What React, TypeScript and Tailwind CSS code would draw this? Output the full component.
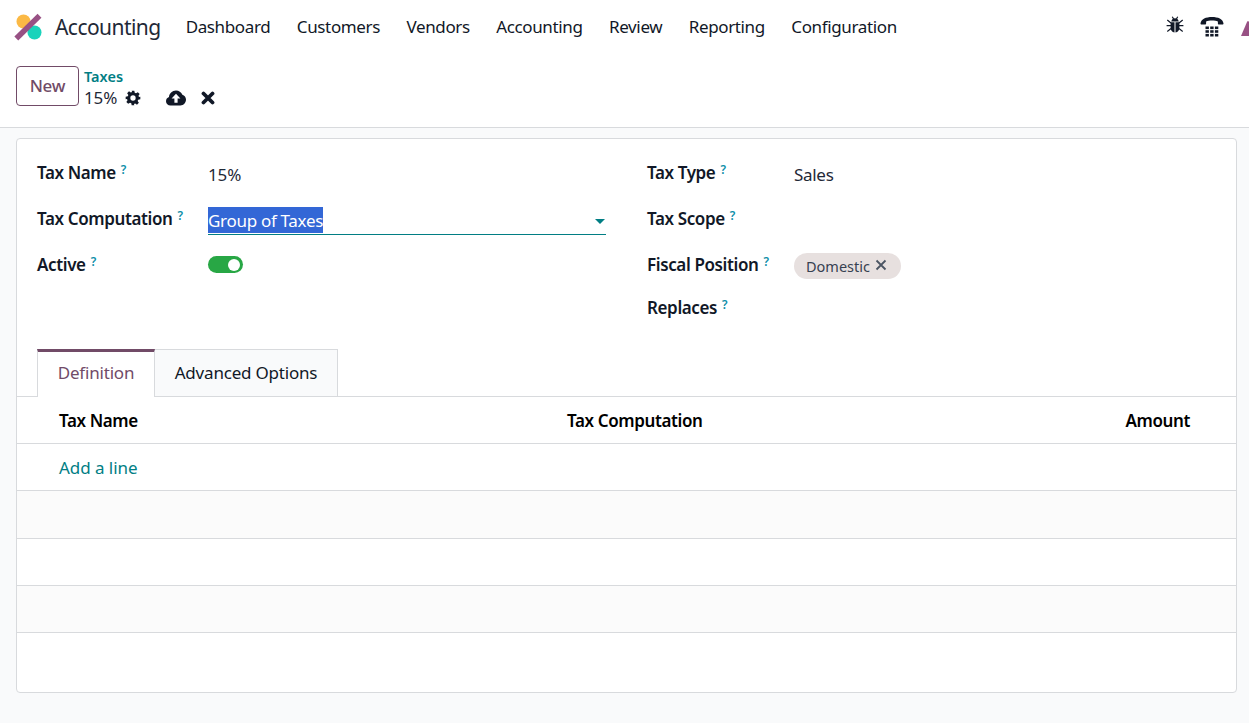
import React from "react";

function Help() {
  return <sup className="text-[#0d8ea8] text-[12px] font-semibold leading-none ml-[5px] relative -top-[5px] tracking-normal">?</sup>;
}

function Label({ children }: { children: React.ReactNode }) {
  return (
    <div className="font-semibold text-[#111827] text-[17px] leading-[23px] whitespace-nowrap tracking-[-0.38px]">
      {children}
      <Help />
    </div>
  );
}

function Logo() {
  return (
    <svg width="28" height="28" viewBox="0 0 28 28">
      <circle cx="9.500" cy="8.500" r="7" fill="#fbb945" />
      <circle cx="20.500" cy="19.500" r="7" fill="#1ad3bb" />
      <path d="M2.300 25.500 L25.500 2.800" stroke="#985184" strokeWidth="5.500" fill="none" />
    </svg>
  );
}

const dark = "#111827";

function Gear() {
  return (
    <svg width="16" height="16" viewBox="0 0 24 24" fill={dark}>
      <path fillRule="evenodd" d="M10 1h4l.6 3.200 1.900.8 2.700-1.800 2.800 2.800-1.800 2.700.8 1.900L23 10v4l-3.200.6-.8 1.900 1.800 2.700-2.800 2.800-2.700-1.800-1.900.8L14 23h-4l-.6-3.200-1.900-.8-2.700 1.800-2.800-2.800 1.800-2.700-.8-1.900L1 14v-4l3.200-.6.8-1.900-1.800-2.700 2.800-2.800 2.700 1.800 1.900-.8L10 1zm2 7a4 4 0 1 0 0 8 4 4 0 0 0 0-8z" />
    </svg>
  );
}

function Cloud() {
  return (
    <svg width="20" height="16" viewBox="0 0 20 16">
      <path fill={dark} d="M4.500 15.500C2 15.500 0 13.600 0 11.200c0-1.900 1.200-3.500 3-4.100C3.200 3.500 6.200.5 10 .5c2.900 0 5.300 1.700 6.400 4.200 2.100.6 3.600 2.600 3.600 4.900 0 3.200-2.500 5.900-5.600 5.900H4.500z" />
      <path fill="#fff" d="M10 3.800 5.600 8.400h2.800v4.400h3.200V8.400h2.800L10 3.800z" />
    </svg>
  );
}

function Times() {
  return (
    <svg width="14" height="14" viewBox="0 0 14 14">
      <path d="M2.500 2.500 L11.500 11.500 M11.500 2.500 L2.500 11.500" stroke={dark} strokeWidth="3.800" strokeLinecap="round" />
    </svg>
  );
}

function Bug() {
  return (
    <svg width="18" height="18" viewBox="0 0 18 18" fill={dark}>
      <path d="M5.200 5.600C5.600 3.400 7.100 2.200 9 2.200s3.400 1.200 3.800 3.400H5.200z" />
      <path d="M4.600 6.300h3.900V16.500C6.200 16.200 4.600 14.300 4.600 11.500V6.300zM9.500 6.300h3.900v5.200c0 2.800-1.600 4.700-3.900 5V6.300z" />
      <path d="M6.300 0.800 7.600 3M11.700 0.800 10.400 3M1.300 4 5 7M16.700 4 13 7M.6 9.700h4.600M17.400 9.700h-4.600M1.300 15.400 5 12.600M16.700 15.400 13 12.600" stroke={dark} strokeWidth="1.200" fill="none" />
    </svg>
  );
}

function Phone() {
  return (
    <svg width="24" height="22" viewBox="0 0 24 22" fill={dark}>
      <path d="M0.500 7.500C1 3 6 1 12 1s11 2 11.500 6.500c0 .6-.4 1-1 1h-3.600c-.6 0-1-.4-1-1V5.600C16.500 4.800 14.400 4.500 12 4.500s-4.500.3-5.900 1.100v1.900c0 .6-.4 1-1 1H1.500c-.6 0-1-.4-1-1z" />
      {[0, 1, 2].map((r) =>
        [0, 1, 2].map((c) => <rect key={r + "-" + c} x={5.500 + c * 4.700} y={10.500 + r * 3.700} width="3.400" height="2.600" />)
      )}
    </svg>
  );
}

const menu = ["Dashboard", "Customers", "Vendors", "Accounting", "Review", "Reporting", "Configuration"];

export default function App() {
  return (
    <div className="h-[723px] overflow-hidden bg-[#f9fafb] flex flex-col text-[17px] text-[#1f2937]" style={{ fontFamily: '"Noto Sans", sans-serif' }}>
      <header className="bg-white h-[54px] shrink-0 flex items-center pl-[14px] relative overflow-hidden">
        <Logo />
        <span className="ml-[13px] text-[21px] tracking-[-0.55px] text-[#1f2937] relative top-[1px]">Accounting</span>
        <nav className="flex ml-[25px] gap-[26.500px] text-[17px] tracking-[-0.37px] text-[#111827]">
          {menu.map((m) => (
            <span key={m}>{m}</span>
          ))}
        </nav>
        <div className="ml-auto flex items-center gap-[16px] pr-[25px]">
          <span className="flex -mt-[4px]"><Bug /></span>
          <Phone />
        </div>
        <div className="absolute right-0 top-[20px] w-[8px] h-[16px] overflow-hidden">
          <svg width="14" height="16" viewBox="0 0 14 16"><path d="M0 16 L6 2 Q7 0 8 2 L14 16z" fill="#985184" /></svg>
        </div>
      </header>

      <div className="bg-white h-[74px] shrink-0 border-b border-[#d8dadd] flex items-start pl-[16px] pt-[12px]">
        <button className="w-[63px] h-[40px] border border-[#714b67] rounded-[4px] text-[#714b67] font-medium text-[17px] tracking-[-0.2px]">New</button>
        <div className="ml-[5px] mt-[1px]">
          <div className="text-[#017e84] font-semibold text-[14.500px] leading-[19px]">Taxes</div>
          <div className="flex items-center h-[24px]">
            <span className="text-[17px] tracking-[-0.1px]">15%</span>
            <span className="ml-[8px] flex"><Gear /></span>
            <span className="ml-[25px] flex"><Cloud /></span>
            <span className="ml-[15px] flex"><Times /></span>
          </div>
        </div>
      </div>

      <main className="mx-[16px] mt-[10px] h-[555px] w-[1221px] bg-white border border-[#d8dadd] rounded-[4px] flex flex-col">
        <div className="flex h-[210px] shrink-0">
          <div className="w-[590px] pl-[20px] pt-[22px] flex flex-col">
            <div className="flex h-[46px]">
              <div className="w-[171px]"><Label>Tax Name</Label></div>
              <div className="leading-[28px] tracking-[-0.1px]">15%</div>
            </div>
            <div className="flex h-[46px]">
              <div className="w-[171px]"><Label>Tax Computation</Label></div>
              <div className="w-[398px] h-[28px] border-b border-[#017e84] flex justify-between items-start">
                <span className="bg-[#3367d6] text-white leading-[27px] h-[26px] tracking-[-0.3px]">Group of Taxes</span>
                <span className="mt-[12px] mr-[1px] w-0 h-0 border-x-[5px] border-x-transparent border-t-[5px] border-t-[#017e84]" />
              </div>
            </div>
            <div className="flex h-[46px]">
              <div className="w-[171px]"><Label>Active</Label></div>
              <div className="w-[35px] h-[17px] mt-[3px] rounded-full bg-[#28a745] flex items-center justify-end pr-[3px]">
                <span className="w-[12px] h-[12px] rounded-full bg-white" />
              </div>
            </div>
          </div>
          <div className="pl-[40px] pt-[22px] flex flex-col">
            <div className="flex h-[46px]">
              <div className="w-[147px]"><Label>Tax Type</Label></div>
              <div className="leading-[28px] tracking-[-0.3px]">Sales</div>
            </div>
            <div className="h-[46px]"><Label>Tax Scope</Label></div>
            <div className="flex h-[43px]">
              <div className="w-[147px]"><Label>Fiscal Position</Label></div>
              <div className="h-[26px] w-[107px] rounded-full bg-[#e7e0df] flex items-center pl-[12px] pt-[1px] text-[14.500px] text-[#374151] gap-[5px]">
                Domestic
                <svg width="12" height="12" viewBox="0 0 12 12" className="-mt-[4px]"><path d="M1.500 1.500 L10.500 10.500 M10.500 1.500 L1.500 10.500" stroke="#4b5563" strokeWidth="1.800" /></svg>
              </div>
            </div>
            <div className="h-[46px]"><Label>Replaces</Label></div>
          </div>
        </div>

        <div className="flex pl-[20px] h-[48px] shrink-0 border-b border-[#d8dadd] relative">
          <div className="w-[118px] h-[48px] border-x border-[#d8dadd] border-t-[3px] border-t-[#714b67] bg-white text-[#714b67] flex items-start pt-[8px] justify-center relative z-10 -mb-px tracking-[-0.2px]">Definition</div>
          <div className="w-[183px] h-[47px] border-t border-r border-[#d8dadd] bg-[#f9fafb] text-[#111827] flex items-center justify-center tracking-[-0.2px]">Advanced Options</div>
        </div>

        <div className="h-[47px] shrink-0 border-b border-[#d8dadd] flex items-center font-semibold text-black pl-[42px] pr-[46px] tracking-[-0.38px] pt-[2px]">
          <span className="w-[508px]">Tax Name</span>
          <span>Tax Computation</span>
          <span className="ml-auto">Amount</span>
        </div>
        <div className="h-[47px] shrink-0 border-b border-[#d8dadd] flex items-center pl-[42px] text-[#017e84] pt-[2px] tracking-[-0.05px]">Add a line</div>
        <div className="h-[48px] shrink-0 border-b border-[#d8dadd] bg-[#fbfbfb]" />
        <div className="h-[47px] shrink-0 border-b border-[#d8dadd]" />
        <div className="h-[47px] shrink-0 border-b border-[#d8dadd] bg-[#fbfbfb]" />
      </main>
    </div>
  );
}
